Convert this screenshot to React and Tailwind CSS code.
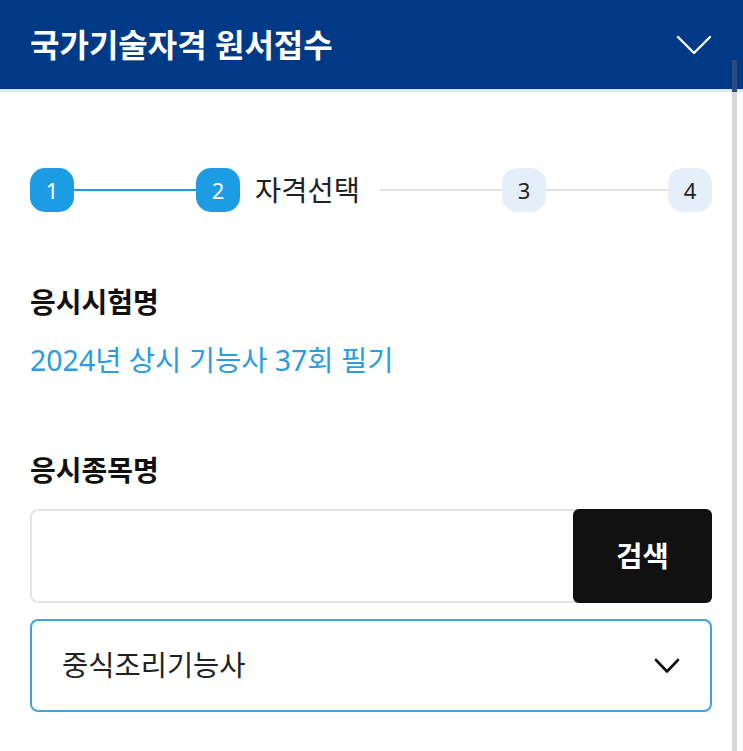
const font = { fontFamily: '"Noto Sans", "Noto Sans CJK KR", sans-serif' };

function Step({ n, active }) {
    return (
        <div
            className={`flex h-[44px] w-[44px] flex-shrink-0 items-center justify-center rounded-[15px] text-[22px] ${
                active ? 'bg-[#1c9de3] text-white' : 'bg-[#e5eff9] text-[#222]'
            }`}
        >
            {n}
        </div>
    );
}

export default function App() {
    return (
        <div className="relative h-[751px] w-[743px] overflow-hidden bg-white" style={font}>
            {/* Header */}
            <header className="flex h-[92px] items-center justify-between border-b-[3px] border-[#dbe8f6] bg-[#003a86] pl-[30px] pr-[30px]">
                <h1 className="text-[32px] font-bold leading-none text-white">국가기술자격 원서접수</h1>
                <svg width="36" height="22" viewBox="0 0 36 22" fill="none" className="mr-[1px]">
                    <path d="M2 3 L18 19 L34 3" stroke="white" strokeWidth="2.4" strokeLinecap="round" strokeLinejoin="round" />
                </svg>
            </header>

            <div className="px-[30px] pr-[31px]">
                {/* Stepper */}
                <div className="mt-[76px] flex items-center">
                    <Step n="1" active />
                    <div className="h-[2px] flex-1 bg-[#1c9de3]" />
                    <Step n="2" active />
                    <span className="ml-[15px] mr-[20px] text-[28.5px] leading-none text-[#222]">자격선택</span>
                    <div className="h-[2px] flex-1 bg-[#e2e2e2]" />
                    <Step n="3" />
                    <div className="h-[2px] flex-1 bg-[#e2e2e2]" />
                    <Step n="4" />
                </div>

                {/* 응시시험명 */}
                <div className="mt-[72px] text-[28px] font-bold leading-[36px] text-[#111]">응시시험명</div>
                <div className="mt-[22px] text-[28.5px] leading-[36px] text-[#2a9de0]">2024년 상시 기능사 37회 필기</div>

                {/* 응시종목명 */}
                <div className="mt-[74px] text-[28px] font-bold leading-[36px] text-[#111]">응시종목명</div>
                <div className="mt-[21px] flex h-[94px] rounded-[8px] border-2 border-[#e3e3e3]">
                    <div className="flex-1" />
                    <button className="-my-[2px] -mr-[2px] w-[139px] rounded-[6px] bg-[#111] text-[28.5px] font-bold text-white">검색</button>
                </div>
                <div className="mt-[16px] flex h-[93px] items-center justify-between rounded-[8px] border-2 border-[#3ea3dd] pl-[30px] pr-[30px]">
                    <span className="text-[28.5px] text-[#222]">중식조리기능사</span>
                    <svg width="26" height="16" viewBox="0 0 26 16" fill="none">
                        <path d="M2 2 L13 13.5 L24 2" stroke="#111" strokeWidth="2.6" strokeLinecap="round" strokeLinejoin="round" />
                    </svg>
                </div>
            </div>

            {/* scrollbar */}
            <div className="absolute right-[6px] top-[60px] h-[32px] w-[5px] bg-[#2e4c80]" />
            <div className="absolute bottom-0 right-[6px] top-[92px] w-[5px] bg-[#d9d9d9]" />
        </div>
    );
}
